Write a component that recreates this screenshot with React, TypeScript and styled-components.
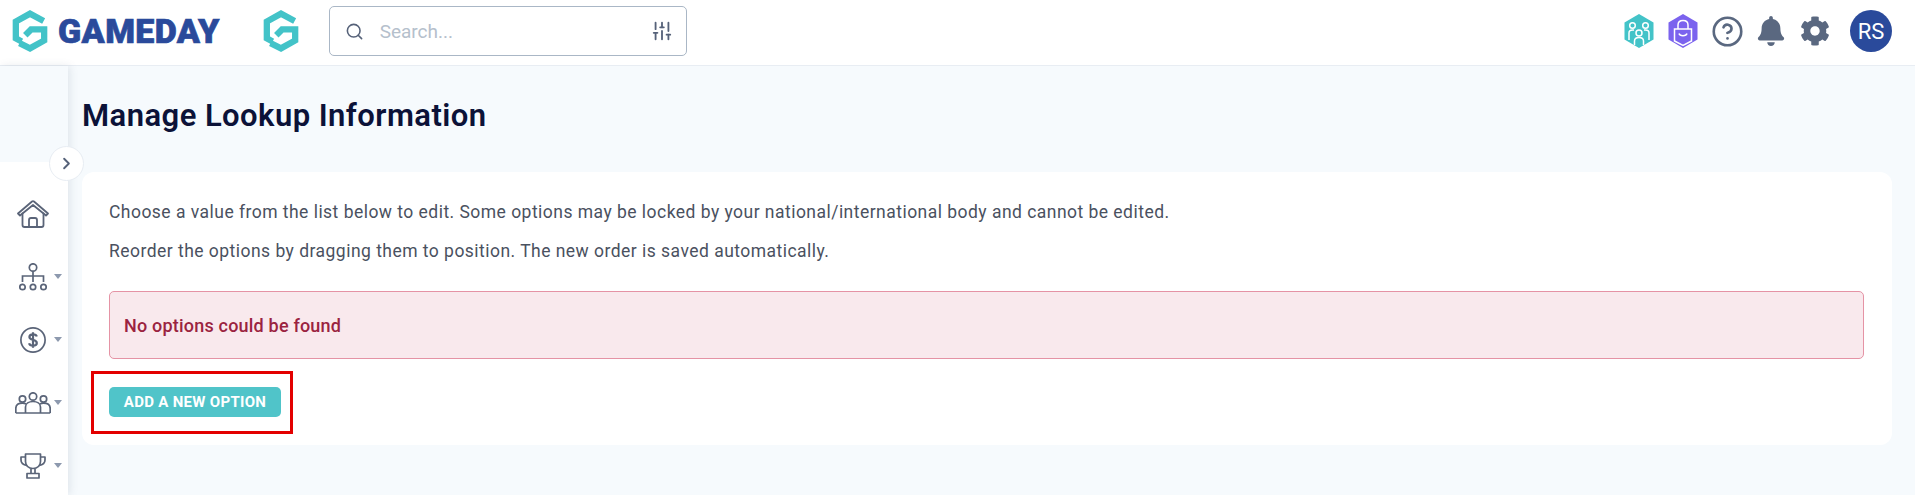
import React from "react";
import styled, { createGlobalStyle } from "styled-components";
import { Search, SlidersVertical, ChevronRight, CircleHelp } from "lucide-react";
import { FaBell, FaCog } from "react-icons/fa";

const GlobalStyle = createGlobalStyle`
  html, body {
    margin: 0;
    height: 100%;
    overflow: hidden;
    background: #f6fafd;
    font-family: Roboto, "Liberation Sans", sans-serif;
  }
  * { box-sizing: border-box; }
`;

const HexLogo = () => (
    <svg width="36" height="42" viewBox="0 0 34 40" fill="none" stroke="#43c3c8" strokeWidth="6" strokeLinejoin="miter">
        <path d="M30 10.5L17 3.5L3.5 11V27L9 30" />
        <path d="M7 31.5L17 36.5L30.5 29V18.5H18L12.5 24" />
    </svg>
);

const TeamBadge = () => (
    <svg width="30" height="34" viewBox="0 0 30 34">
        <path d="M15 0L29.5 8.5V25.5L15 34L0.5 25.5V8.5Z" fill="#43c3c8" />
        <g fill="none" stroke="#fff" strokeWidth="1.5">
            <circle cx="8.5" cy="11.5" r="2.8" />
            <circle cx="21.5" cy="11.5" r="2.8" />
            <path d="M5 26V19C5 17 6.5 16 8.5 16H10M25 26V19C25 17 23.5 16 21.5 16H20" />
            <circle cx="15" cy="19" r="3" />
            <path d="M10.5 31V27C10.5 24.5 12.5 23.5 15 23.5C17.5 23.5 19.5 24.5 19.5 27V31" />
        </g>
    </svg>
);

const ShopBadge = () => (
    <svg width="30" height="34" viewBox="0 0 30 34">
        <path d="M15 0L29.5 8.5V25.5L15 34L0.5 25.5V8.5Z" fill="#7b63ee" />
        <g fill="none" stroke="#fff" strokeWidth="1.5">
            <path d="M6.5 15H23.5V27L15 31.5L6.5 27Z" />
            <path d="M10 15V11C10 8 12.2 6.5 15 6.5C17.8 6.5 20 8 20 11V15" />
            <path d="M11 19.5C12 22.5 18 22.5 19 19.5" />
        </g>
    </svg>
);

const HomeIcon = () => (
    <svg width="32" height="28" viewBox="0 0 32 28" fill="none" stroke="#5a6478" strokeWidth="1.8" strokeLinejoin="round" strokeLinecap="round">
        <path d="M1 13.5L15 1.5C15.6 1 16.4 1 17 1.5L31 13.5L29 15.5L16 5L3 15.5Z" />
        <path d="M5.5 13.5V25C5.5 26.2 6.3 27 7.5 27H24.5C25.7 27 26.5 26.2 26.5 25V13.5" />
        <path d="M12 27V20C12 18.8 12.8 18 14 18H18C19.2 18 20 18.8 20 20V27" />
    </svg>
);

const OrgIcon = () => (
    <svg width="28" height="28" viewBox="0 0 28 28" fill="none" stroke="#5a6478" strokeWidth="1.7">
        <circle cx="14" cy="4.5" r="3.7" />
        <path d="M14 8.2V19M3.5 19V13H24.5V19" />
        <circle cx="3.5" cy="24" r="2.7" />
        <circle cx="14" cy="24" r="2.7" />
        <circle cx="24.5" cy="24" r="2.7" />
    </svg>
);

const DollarIcon = () => (
    <svg width="26" height="26" viewBox="0 0 26 26" fill="none" stroke="#5a6478">
        <circle cx="13" cy="13" r="12.1" strokeWidth="1.7" />
        <path d="M16.8 9.6C16.4 8 15 7.3 13 7.3C10.8 7.3 9.4 8.3 9.4 10C9.4 13.8 16.8 11.8 16.8 16C16.8 17.7 15.3 18.7 13 18.7C10.9 18.7 9.5 17.9 9.1 16.3M13 5.3V20.7" strokeWidth="2.2" />
    </svg>
);

const PeopleIcon = () => (
    <svg width="36" height="22" viewBox="0 0 36 22" fill="none" stroke="#5a6478" strokeWidth="1.7" strokeLinejoin="round">
        <circle cx="18" cy="4.5" r="3.7" />
        <circle cx="7.5" cy="7" r="3.2" />
        <circle cx="28.5" cy="7" r="3.2" />
        <path d="M10.5 21V15C10.5 11.5 14 9.5 18 9.5C22 9.5 25.5 11.5 25.5 15V21" />
        <path d="M0.8 21V16.5C0.8 13 3.5 11.2 7.5 11.2C8.8 11.2 10 11.4 11 11.9M35.2 21V16.5C35.2 13 32.5 11.2 28.5 11.2C27.2 11.2 26 11.4 25 11.9" />
        <path d="M0.8 21H35.2" />
    </svg>
);

const TrophyIcon = () => (
    <svg width="26" height="26" viewBox="0 0 26 26" fill="none" stroke="#5a6478" strokeWidth="1.7" strokeLinejoin="round">
        <path d="M5.5 1H20.5V8.5C20.5 12.5 17.5 15.5 13 15.5C8.5 15.5 5.5 12.5 5.5 8.5Z" />
        <path d="M5.5 4H1V7C1 10 3.5 12 7 12.5M20.5 4H25V7C25 10 22.5 12 19 12.5" />
        <path d="M11 15.5V20.5M15 15.5V20.5" />
        <path d="M7 20.5H19V25H7Z" />
    </svg>
);

const App = () => {
    return (
        <>
            <GlobalStyle />
            <Header>
                <HexLogo />
                <BrandName>GAMEDAY</BrandName>
                <SecondLogo>
                    <HexLogo />
                </SecondLogo>
                <SearchBox>
                    <Search size={19} color="#566279" strokeWidth={2} />
                    <SearchText>Search...</SearchText>
                    <SlidersVertical size={22} color="#566279" strokeWidth={2} />
                </SearchBox>
                <HeaderIcons>
                    <IconSlot><TeamBadge /></IconSlot>
                    <IconSlot><ShopBadge /></IconSlot>
                    <IconSlot><CircleHelp size={33} color="#5a6880" strokeWidth={1.9} /></IconSlot>
                    <IconSlot><FaBell size={30} color="#5a6880" /></IconSlot>
                    <IconSlot><FaCog size={30} color="#5a6880" /></IconSlot>
                    <Avatar>RS</Avatar>
                </HeaderIcons>
            </Header>
            <Body>
                <Sidebar>
                    <Toggle>
                        <ChevronRight size={19} color="#566279" strokeWidth={2.4} />
                    </Toggle>
                    <Rail>
                        <NavItem><HomeIcon /></NavItem>
                        <NavItem $caret><OrgIcon /></NavItem>
                        <NavItem $caret><DollarIcon /></NavItem>
                        <NavItem $caret><PeopleIcon /></NavItem>
                        <NavItem $caret><TrophyIcon /></NavItem>
                    </Rail>
                </Sidebar>
                <Main>
                    <Title>Manage Lookup Information</Title>
                    <Card>
                        <Text>Choose a value from the list below to edit. Some options may be locked by your national/international body and cannot be edited.</Text>
                        <Text>Reorder the options by dragging them to position. The new order is saved automatically.</Text>
                        <Alert>No options could be found</Alert>
                        <ButtonRow>
                            <AddButton>ADD A NEW OPTION</AddButton>
                            <Highlight />
                        </ButtonRow>
                    </Card>
                </Main>
            </Body>
        </>
    );
};

const Header = styled.header`
  display: flex;
  align-items: center;
  height: 66px;
  padding: 0 23px 3px 12px;
  background: #fff;
  border-bottom: 1px solid #e8edf3;
`;

const BrandName = styled.span`
  margin-left: 10px;
  font-size: 34px;
  font-weight: 900;
  line-height: 1;
  letter-spacing: 0.4px;
  color: #2a4a9b;
  -webkit-text-stroke: 0.7px #2a4a9b;
`;

const SecondLogo = styled.div`
  display: flex;
  margin-left: 43px;
`;

const SearchBox = styled.div`
  display: flex;
  align-items: center;
  width: 358px;
  height: 50px;
  margin-left: 30px;
  padding: 0 13px 0 15px;
  border: 1px solid #aab7c6;
  border-radius: 5px;
`;

const SearchText = styled.span`
  flex: 1;
  margin-left: 16px;
  font-size: 19px;
  color: #b5c0cc;
`;

const HeaderIcons = styled.div`
  display: flex;
  align-items: center;
  margin-left: auto;
`;

const IconSlot = styled.div`
  display: flex;
  align-items: center;
  justify-content: center;
  width: 44px;
`;

const Avatar = styled.div`
  display: flex;
  align-items: center;
  justify-content: center;
  width: 42px;
  height: 42px;
  margin-left: 13px;
  border-radius: 50%;
  background: #2a4a9b;
  color: #fff;
  font-size: 22px;
  font-weight: 400;
`;

const Body = styled.div`
  display: flex;
  height: calc(100vh - 66px);
`;

const Sidebar = styled.aside`
  position: relative;
  display: flex;
  flex-direction: column;
  flex: 0 0 68px;
  padding-top: 96px;
  box-shadow: 2px 0 8px rgba(90, 104, 128, 0.14);
`;

const Toggle = styled.button`
  position: absolute;
  top: 80px;
  left: 49px;
  z-index: 2;
  display: flex;
  align-items: center;
  justify-content: center;
  width: 35px;
  height: 35px;
  padding: 0;
  border: 1px solid #e8edf3;
  border-radius: 50%;
  background: #fff;
`;

const Rail = styled.nav`
  flex: 1;
  padding-top: 20px;
  background: #fff;
`;

const NavItem = styled.div<{ $caret?: boolean }>`
  position: relative;
  display: flex;
  align-items: center;
  justify-content: center;
  width: 66px;
  height: 63px;

  &::after {
    content: "";
    display: ${(props) => (props.$caret ? "block" : "none")};
    position: absolute;
    left: 54px;
    top: 29px;
    border-left: 4px solid transparent;
    border-right: 4px solid transparent;
    border-top: 5px solid #8d99ae;
  }
`;

const Main = styled.main`
  flex: 1;
  padding: 32px 23px 0 14px;
`;

const Title = styled.h1`
  margin: 0 0 38px;
  font-size: 31px;
  font-weight: 600;
  line-height: 36px;
  letter-spacing: 0.45px;
  color: #0c1238;
`;

const Card = styled.section`
  padding: 28px 28px 28px 27px;
  background: #fff;
  border-radius: 12px;
`;

const Text = styled.p`
  margin: 0 0 15px;
  font-size: 17.5px;
  line-height: 24px;
  letter-spacing: 0.47px;
  color: #4a5160;
`;

const Alert = styled.div`
  display: flex;
  align-items: center;
  height: 68px;
  margin: 28px 0;
  padding: 0 14px;
  border: 1px solid #e593a5;
  border-radius: 5px;
  background: #f9e9ed;
  color: #9b2340;
  font-size: 18px;
  font-weight: 500;
  letter-spacing: 0.2px;
`;

const ButtonRow = styled.div`
  position: relative;
  width: 172px;
`;

const AddButton = styled.button`
  display: block;
  width: 172px;
  height: 30px;
  padding: 0;
  border: none;
  border-radius: 5px;
  background: #50c4c9;
  color: #fff;
  font-family: inherit;
  font-size: 15px;
  font-weight: 700;
  letter-spacing: 0.3px;
`;

const Highlight = styled.span`
  position: absolute;
  top: -16px;
  left: -18px;
  right: -12px;
  bottom: -17px;
  border: 3px solid #e30000;
  pointer-events: none;
`;

export default App;
